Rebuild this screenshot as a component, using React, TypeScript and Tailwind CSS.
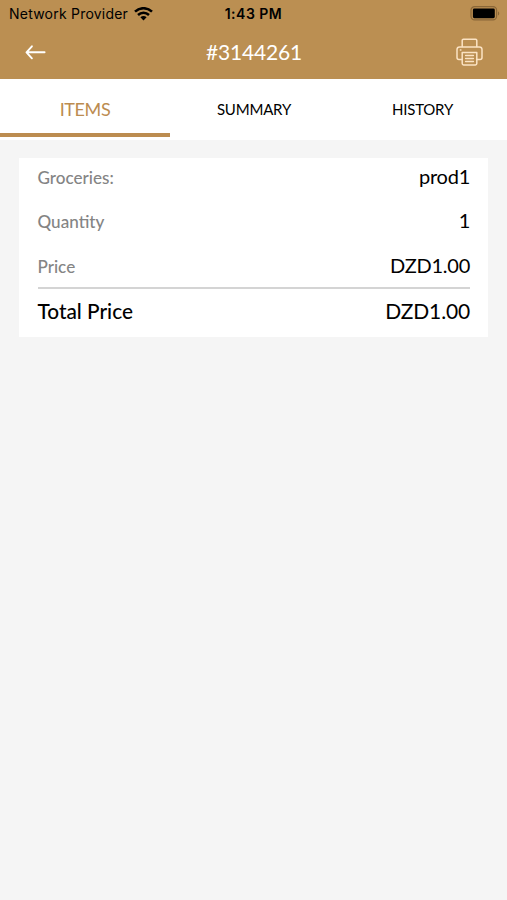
const tabs = ["ITEMS", "SUMMARY", "HISTORY"];

const rows = [
  { label: "Groceries:", value: "prod1" },
  { label: "Quantity", value: "1" },
  { label: "Price", value: "DZD1.00" },
];

const WifiIcon = () => (
  <svg width="19" height="14" viewBox="0 0 19 14" fill="none" stroke="black" strokeWidth="2.5">
    <path d="M1 4.7C5.9 0 13.1 0 18 4.7" />
    <path d="M4 8c3.2-3 7.8-3 11 0" />
    <path d="M9.5 13.4 6.4 10.3c1.8-1.6 4.4-1.6 6.2 0z" fill="black" stroke="none" />
  </svg>
);

const BatteryIcon = () => (
  <svg width="30" height="15" viewBox="0 0 30 15" fill="none">
    <rect x="1" y="0.7" width="25.6" height="13.2" rx="3.6" stroke="#8a6738" strokeWidth="1.2" />
    <rect x="2.9" y="2.6" width="21.9" height="9.6" rx="1.4" fill="black" />
    <path d="M28 5.2c1.7.8 1.7 3.6 0 4.4z" fill="#8a6738" />
  </svg>
);

const BackIcon = () => (
  <svg width="21" height="16" viewBox="0 0 21 16" fill="none" stroke="white" strokeWidth="1.9" strokeLinecap="round" strokeLinejoin="round">
    <path d="M19.6 8.3H1.6M6.9 2.3 1.5 8.3 6.9 14.3" />
  </svg>
);

const PrinterIcon = () => (
  <svg width="27" height="28" viewBox="0 0 27 28" fill="none" stroke="#fbe3c4" strokeWidth="1.5" strokeLinejoin="round" strokeLinecap="round">
    <path d="M6.2 8.6V2.4a1.2 1.2 0 0 1 1.2-1.2h12.2a1.2 1.2 0 0 1 1.2 1.2v6.2" />
    <path d="M6.2 21.4H3a2 2 0 0 1-2-2V11.6A2.6 2.6 0 0 1 3.6 9h19.8a2.6 2.6 0 0 1 2.6 2.6v7.8a2 2 0 0 1-2 2h-3.2" />
    <path d="M6.2 14.4h14.6v11.2a1.4 1.4 0 0 1-1.4 1.4H7.6a1.4 1.4 0 0 1-1.4-1.4z" />
    <path d="M9.6 17.6h7.8M9.6 20.6h7.8M9.6 23.6h7.8M4.4 12h.5" />
  </svg>
);

const App = () => {
  return (
    <div className="flex h-[900px] w-[507px] flex-col bg-[#f5f5f5] font-['Lato',sans-serif] text-black">
      <header className="h-[79px] bg-[#bb8f52]">
        <div className="grid h-[27px] grid-cols-3 items-center pr-[7px] pl-[9px] font-['Inter',sans-serif]">
          <div className="flex items-center gap-[6px]">
            <span className="text-[14px] leading-[20px] tracking-[0.22px] whitespace-nowrap">Network Provider</span>
            <WifiIcon />
          </div>
          <span className="pr-[2px] text-center text-[14px] leading-[20px] font-semibold tracking-[0.5px]">1:43 PM</span>
          <div className="flex justify-end">
            <BatteryIcon />
          </div>
        </div>
        <div className="grid h-[50px] grid-cols-3 items-center pr-6 pl-[25px] text-white">
          <button aria-label="Back">
            <BackIcon />
          </button>
          <h1 className="text-center text-[21px] leading-[26px] tracking-[-0.2px]">#3144261</h1>
          <button aria-label="Print" className="justify-self-end">
            <PrinterIcon />
          </button>
        </div>
      </header>

      <nav className="grid h-[61px] grid-cols-[170px_168px_169px] bg-white">
        {tabs.map((tab, index) => (
          <button
            key={tab}
            className={`h-[58px] ${
              index === 0
                ? "border-b-4 border-[#bc8c50] pt-[6px] text-[18px] tracking-[-0.4px] text-[#bc8c50]"
                : "pt-[2px] text-[15px] tracking-[-0.2px]"
            }`}
          >
            {tab}
          </button>
        ))}
      </nav>

      <section className="mx-[19px] mt-[18px] h-[179px] bg-white pr-[18px] pl-[18.5px]">
        {rows.map((row) => (
          <div key={row.label} className="flex h-[44.3px] items-start justify-between">
            <span className="text-[17.1px] leading-[39px] font-medium text-[#848484]">{row.label}</span>
            <span className="text-[20px] leading-[36.5px] tracking-[-0.25px]">{row.value}</span>
          </div>
        ))}
        <div className="-mt-[3.5px] flex h-[44px] items-center justify-between border-t-2 border-[#d4d4d4]">
          <span className="text-[20.8px] font-medium">Total Price</span>
          <span className="text-[21px] tracking-[-0.15px]">DZD1.00</span>
        </div>
      </section>
    </div>
  );
};

export default App;
